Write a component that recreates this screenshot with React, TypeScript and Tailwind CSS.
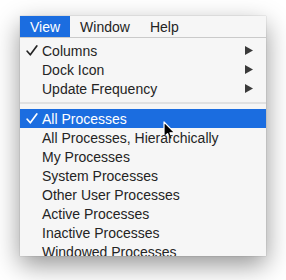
import React from 'react';

interface MenuItem {
  label: string;
  checked?: boolean;
  submenu?: boolean;
  active?: boolean;
}

const topItems: MenuItem[] = [
  { label: 'Columns', checked: true, submenu: true },
  { label: 'Dock Icon', submenu: true },
  { label: 'Update Frequency', submenu: true },
];

const processItems: MenuItem[] = [
  { label: 'All Processes', checked: true, active: true },
  { label: 'All Processes, Hierarchically' },
  { label: 'My Processes' },
  { label: 'System Processes' },
  { label: 'Other User Processes' },
  { label: 'Active Processes' },
  { label: 'Inactive Processes' },
  { label: 'Windowed Processes' },
];

function Row({ item }: { item: MenuItem }) {
  return (
    <div
      className={`relative flex items-center h-[19px] pl-[6px] pr-[13px] ${
        item.active ? 'bg-[#1b6de0] text-white' : 'text-[#242424]'
      }`}
    >
      <span className="w-[16px] shrink-0 flex items-center">
        {item.checked && (
          <svg width="12" height="11" viewBox="0 0 12 11">
            <path
              d="M1.2 6.2 L4.3 9.8 L10.8 1"
              fill="none"
              stroke="currentColor"
              strokeWidth="1.7"
              strokeLinecap="round"
              strokeLinejoin="round"
            />
          </svg>
        )}
      </span>
      <span className="flex-1 whitespace-nowrap pt-[1px]">{item.label}</span>
      {item.submenu && (
        <svg width="8" height="9" viewBox="0 0 8 9" className="shrink-0">
          <path d="M0 0 L8 4.5 L0 9 Z" fill="#3a3a3a" />
        </svg>
      )}
      {item.active && (
        // mouse pointer over the highlighted row
        <svg
          width="13"
          height="20"
          viewBox="0 0 13 20"
          className="absolute left-[143px] top-[12px]"
        >
          <path
            d="M1 1 L1 16 L4.5 12.6 L7 18.5 L9.4 17.5 L7 11.8 L11.8 11.8 Z"
            fill="#000"
            stroke="#fff"
            strokeWidth="1.2"
            strokeLinejoin="round"
          />
        </svg>
      )}
    </div>
  );
}

export default function App() {
  return (
    <div className="w-[286px] h-[280px] bg-white pl-[20px] pt-[16px] font-['Liberation_Sans',Arial,sans-serif] text-[14px] leading-none">
      <div className="w-[246px] h-[240px] bg-[#f6f6f6] shadow-[0_9px_24px_rgba(0,0,0,0.42),0_0_1px_rgba(0,0,0,0.3)] overflow-hidden">
        <div className="flex h-[22px] border-b border-[#cacaca] text-[#242424]">
          <div className="flex items-center px-[10px] bg-[#1b6de0] text-white">View</div>
          <div className="flex items-center px-[10px]">Window</div>
          <div className="flex items-center px-[10px]">Help</div>
        </div>
        <div className="pt-[3px]">
          {topItems.map((item) => (
            <Row key={item.label} item={item} />
          ))}
          <div className="pt-[4px] pb-[5px]">
            <div className="h-[2px] bg-[#e1e1e1]" />
          </div>
          {processItems.map((item) => (
            <Row key={item.label} item={item} />
          ))}
        </div>
      </div>
    </div>
  );
}
